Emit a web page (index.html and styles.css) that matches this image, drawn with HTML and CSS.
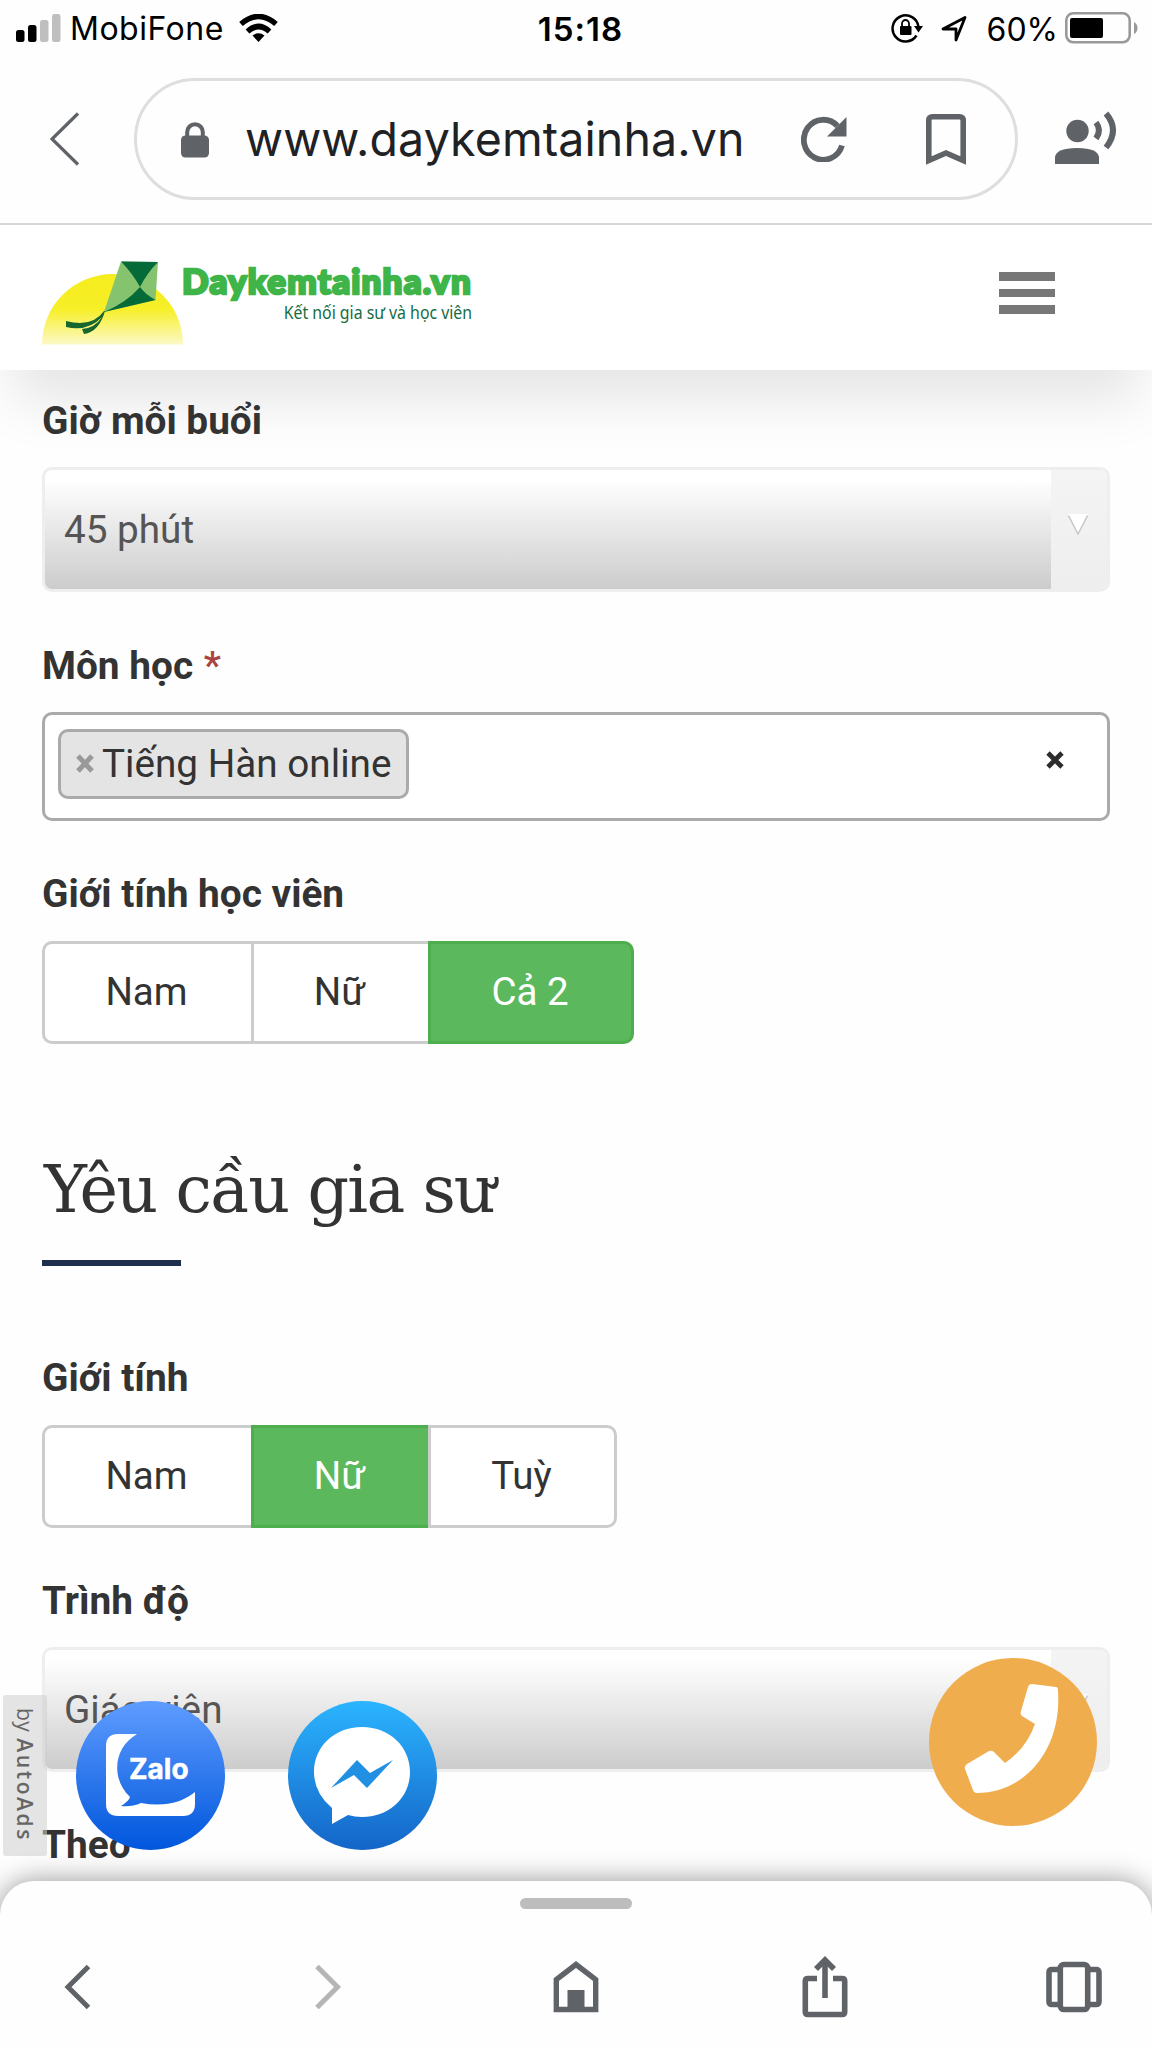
FILE: index.html
```html
<!DOCTYPE html>
<html lang="vi">
<head>
<meta charset="utf-8">
<title>Daykemtainha.vn</title>
<link rel="stylesheet" href="styles.css">
</head>
<body>
<div class="screen">
  <header class="status">
    <div class="status-left">
      <svg width="45" height="28" viewBox="0 0 45 28"><rect x="0" y="16" width="8.500" height="12" rx="2.500"/><rect x="12" y="11" width="8.500" height="17" rx="2.500"/><g fill="#bfbfbf"><rect x="24" y="6" width="8.500" height="22" rx="2.500"/><rect x="36" y="0" width="8.500" height="28" rx="2.500"/></g></svg>
      <span class="carrier">MobiFone</span>
      <svg width="39" height="28" viewBox="0 0 39 28"><g fill="none" stroke="#000" stroke-width="5.500"><path d="M2 10Q19.500-5 37 10"/><path d="M8.500 17.500Q19.500 7.500 30.500 17.500"/></g><path d="M13.500 21.500Q19.500 17 25.500 21.500L19.500 28Z"/></svg>
    </div>
    <span class="clock">15:18</span>
    <div class="status-right">
      <svg width="32" height="30" viewBox="0 0 32 30"><path d="M25.500 22.500A13 13 0 1 1 27.500 14" fill="none" stroke="#000" stroke-width="2.500"/><path d="M23 13h9l-4.500 6.500z"/><rect x="9" y="13" width="11.500" height="9" rx="1"/><path d="M11 14v-3.500a3.500 3.500 0 0 1 7 0V14" fill="none" stroke="#000" stroke-width="1.800"/></svg>
      <svg class="loc" width="26" height="27" viewBox="0 0 26 27"><path d="M2 14L24 2.500L15 25V14Z" fill="none" stroke="#000" stroke-width="2.800" stroke-linejoin="round"/></svg>
      <span class="percent">60%</span>
      <svg width="73" height="32" viewBox="0 0 73 32"><rect x="1.300" y="1.300" width="63.400" height="29" rx="7" fill="none" stroke="#999" stroke-width="2.600"/><rect x="5" y="6" width="33" height="20" rx="2"/><path d="M69 10q3.500 2 3.500 6t-3.500 6z" fill="#999"/></svg>
    </div>
  </header>

  <nav class="browser">
    <svg class="back" width="30" height="54" viewBox="0 0 30 54"><path d="M28 1.500L2 27L28 52.500" fill="none" stroke="#5f6368" stroke-width="3.200"/></svg>
    <div class="omnibox">
      <svg class="lock" width="28" height="36" viewBox="0 0 28 36"><rect x="0" y="13.500" width="28" height="22" rx="4.500" fill="#5f6368"/><path d="M6.200 15V10a7.800 7.800 0 0 1 15.600 0v5" fill="none" stroke="#5f6368" stroke-width="4"/></svg>
      <span class="url">www.daykemtainha.vn</span>
      <svg class="reload" width="46" height="46" viewBox="0 0 46 46"><path d="M41 29.500A19.500 20 0 1 1 36.500 10" fill="none" stroke="#5f6368" stroke-width="5.800"/><path d="M45.500 1v19.500h-19.500z" fill="#5f6368"/></svg>
      <svg class="mark" width="40" height="51" viewBox="0 0 40 51"><path d="M2.800 46.500V6.500Q2.800 2.800 6.500 2.800H33.500Q37.200 2.800 37.200 6.500V46.500L20 39Z" fill="none" stroke="#5f6368" stroke-width="5.600"/></svg>
    </div>
    <svg class="voice" width="62" height="54" viewBox="0 0 62 54"><g fill="#5f6368"><circle cx="22.500" cy="20" r="11.200"/><path d="M0 53v-6Q0 37 22 37T44 47v6z"/></g><g fill="none" stroke="#5f6368" stroke-width="6"><path d="M41 11.500Q47 19 41 27.500"/><path d="M51 2.500Q65 19 51 36.500"/></g></svg>
  </nav>

  <div class="site-head">
    <div class="brand">
      <svg width="142" height="86" viewBox="0 0 142 86">
        <defs><linearGradient id="sun" x1="0" y1="0" x2="0" y2="1"><stop offset="0" stop-color="#f5ed1c"/><stop offset=".5" stop-color="#f7ef28"/><stop offset="1" stop-color="#fcf9c8"/></linearGradient></defs>
        <path d="M0 84.500A70.500 70.500 0 0 1 141 84.500Z" fill="url(#sun)"/>
        <path d="M79 1.500L116 2L113.500 40L62 52Z" fill="#86c36f"/>
        <path d="M79 1.500L116 2Q105 13 98 27Q91 14 79 1.500Z" fill="#046b38"/><path d="M98 27Q104 35 113.500 40L62 52Q84 43 98 27Z" fill="#046b38"/>
        <path d="M62 51Q50 68 24 61v6Q46 72 60 57Q53 68 40 69l2 5Q57 72 63 51Z" fill="#17652f"/>
      </svg>
      <div class="brand-text"><span class="brand-name">Daykemtainha.vn</span><span class="brand-tag">Kết nối gia sư và học viên</span></div>
    </div>
    <div class="burger"><i></i><i></i><i></i></div>
  </div>

  <main class="form">
    <label class="label first">Giờ mỗi buổi</label>
    <div class="select"><span class="select-value">45 phút</span><span class="select-arrow"><svg width="20" height="21" viewBox="0 0 20 21"><path d="M0 0H20L10 20Z" fill="#fff"/><path d="M.5 1.500L10 20L19.500 1.500" fill="none" stroke="#c8c8c8" stroke-width="1.500"/></svg></span></div>

    <label class="label subject-label">Môn học <span class="required">*</span></label>
    <div class="tags">
      <span class="tag"><svg width="18" height="19" viewBox="0 0 18 19"><path d="M2 2L16 17M16 2L2 17" stroke="#999" stroke-width="5"/></svg><span>Tiếng Hàn online</span></span>
      <svg class="clear" width="18" height="18" viewBox="0 0 18 18"><path d="M2 2L16 16M16 2L2 16" stroke="#2d2d2d" stroke-width="4.800"/></svg>
    </div>

    <label class="label student-label">Giới tính học viên</label>
    <div class="group"><span class="opt w1">Nam</span><span class="opt w2">Nữ</span><span class="opt w3 on">Cả 2</span></div>

    <h2 class="title">Yêu cầu gia sư</h2>
    <div class="rule"></div>

    <label class="label tutor-label">Giới tính</label>
    <div class="group"><span class="opt w1">Nam</span><span class="opt w2 on">Nữ</span><span class="opt w4">Tuỳ</span></div>

    <label class="label level-label">Trình độ</label>
    <div class="select"><span class="select-value">Giáo viên</span><span class="select-arrow"><svg width="20" height="21" viewBox="0 0 20 21"><path d="M0 0H20L10 20Z" fill="#fff"/><path d="M.5 1.500L10 20L19.500 1.500" fill="none" stroke="#c8c8c8" stroke-width="1.500"/></svg></span></div>
    <label class="label by-label">Theo</label>
  </main>

  <div class="autoads"><span>by <b>AutoAds</b></span></div>
  <div class="fab zalo">
    <svg width="150" height="150" viewBox="0 0 150 150"><path d="M61 33H42Q30 33 30 45V103Q30 115 42 115H107Q119 115 119 103V91Q98 108 65 102Q56 106 45 105Q53 100 54 96C35 78 37 47 61 33Z" fill="#fff"/></svg>
    <span class="zalo-text">Zalo</span>
  </div>
  <div class="fab messenger">
    <svg width="150" height="150" viewBox="0 0 150 150"><path d="M74 26C46 26 26 46 26 71Q26 92 44 107V123L60 114Q67 116 74 116C102 116 122 96 122 71S102 26 74 26Z" fill="#fff"/><path d="M43 87L69 59L82 72L105 59L79 87L66 74Z" fill="#2190e3"/></svg>
  </div>
  <div class="fab phone">
    <svg width="168" height="168" viewBox="0 0 168 168"><path d="M103 26L127 29Q129 29 129 33C133 94 94 135 48 135Q45 135 44 132L36 111Q35 108 38 106L60 93Q63 92 65 94L76 105Q97 91 106 66L93 58Q91 56 92 53L99 29Q100 26 103 26Z" fill="#fff"/></svg>
  </div>

  <footer class="toolbar">
    <div class="handle"></div>
    <div class="tools">
      <svg width="60" height="64" viewBox="0 0 60 64"><path d="M40.500 12.500L20 33L40.500 53.500" fill="none" stroke="#5f6368" stroke-width="5"/></svg>
      <svg width="60" height="64" viewBox="0 0 60 64"><path d="M20 12.500L40.500 33L20 53.500" fill="none" stroke="#b5b5b5" stroke-width="5"/></svg>
      <svg width="60" height="64" viewBox="0 0 60 64"><path d="M10.300 55.500V25.500L30 10.500L49.700 25.500V55.500Z" fill="none" stroke="#5f6368" stroke-width="5.400"/><path d="M21.500 36h17v20h-17z" fill="#5f6368"/></svg>
      <svg width="60" height="64" viewBox="0 0 60 64"><g fill="none" stroke="#5f6368" stroke-width="5.600"><path d="M22 24.500H13Q10.300 24.500 10.300 27V58Q10.300 60.500 13 60.500H47Q49.700 60.500 49.700 58V27Q49.700 24.500 47 24.500H38"/><path d="M30 44V7"/><path d="M21 15L30 6L39 15"/></g></svg>
      <svg width="60" height="64" viewBox="0 0 60 64"><g fill="none" stroke="#5f6368" stroke-width="5.600"><rect x="16.300" y="10.500" width="27.400" height="45" rx="3.500"/><path d="M16 15.500H8Q5 15.500 5 18.500V47.500Q5 50.500 8 50.500H16"/><path d="M44 15.500H52Q55 15.500 55 18.500V47.500Q55 50.500 52 50.500H44"/></g></svg>
    </div>
  </footer>
</div>
</body>
</html>
```
FILE: styles.css
```css
* { box-sizing: border-box; }
body { margin: 0; background: #fff; }
svg { display: block; flex: none; }
.screen { position: relative; width: 1152px; height: 2048px; overflow: hidden; background: #fefefe; display: flex; flex-direction: column; font-family: Roboto, "Liberation Sans", sans-serif; color: #333; }

.status { height: 56px; flex: none; display: grid; grid-template-columns: 1fr auto 1fr; align-items: center; padding: 0 14px 0 16px; font-family: Inter, sans-serif; color: #000; font-size: 32px; }
.status-left, .status-right { display: flex; align-items: center; }
.status-right { justify-content: flex-end; }
.carrier { width: 153px; margin-left: 9px; margin-right: 16px; white-space: nowrap; letter-spacing: .5px; line-height: 55px; padding-top: 1px; }
.clock { font-weight: 600; padding: 2px 0 0 7px; font-size: 33px; letter-spacing: 1px; }
.loc { margin-left: 18px; }
.percent { margin-left: 20px; margin-right: 7px; padding-top: 2px; letter-spacing: 0; }

.browser { height: 169px; flex: none; border-bottom: 2px solid #d6d6d6; display: flex; padding: 22px 35px 0 50px; }
.back { margin-top: 34px; }
.omnibox { width: 884px; height: 122px; margin-left: 54px; border: 3px solid #dedede; border-radius: 61px; display: flex; align-items: center; padding-left: 44px; }
.lock { margin-top: 1px; }
.url { width: 498px; margin-left: 36px; font-family: Inter, sans-serif; font-size: 46.500px; letter-spacing: .1px; color: #202124; white-space: nowrap; }
.reload { margin-left: 58px; }
.mark { margin-left: 79px; }
.voice { margin: 33px 0 0 37px; }

.site-head { height: 145px; flex: none; background: #fff; display: flex; justify-content: space-between; padding: 35px 97px 0 42px; position: relative; z-index: 1; box-shadow: 0 42px 56px -12px rgba(0,0,0,.1); }
.brand { display: flex; }
.brand-text { width: 288px; padding-top: 2px; display: flex; flex-direction: column; align-items: flex-end; white-space: nowrap; }
.brand-name { font-size: 35px; line-height: 36px; font-weight: 900; font-family: Lato, sans-serif; letter-spacing: 1.200px; color: #3fb549; -webkit-text-stroke: 2.600px #3fb549; }
.brand-tag { font-family: "Noto Sans", sans-serif; font-size: 18px; line-height: 24px; margin-top: 2px; color: #156c43; transform: scaleX(.88); transform-origin: right; }
.burger { display: flex; flex-direction: column; gap: 8px; width: 56px; padding-top: 12px; }
.burger i { height: 8.500px; background: #777; }

.form { padding: 0 42px; display: flex; flex-direction: column; align-items: flex-start; position: relative; z-index: 2; }
.label { font-size: 38.800px; line-height: 44px; font-weight: 700; color: #333; white-space: nowrap; }
.first { margin-top: 29px; }
.select { width: 1068px; height: 125px; border: 3px solid #eee; border-radius: 10px; display: flex; margin-top: 24px; overflow: hidden; }
.select-value { flex: 1; font-size: 38.700px; line-height: 120px; padding-left: 19px; color: #555; background: linear-gradient(#fff 8%, #ccc); }
.select-arrow { width: 56px; background: linear-gradient(#f4f4f4, #eee); padding: 44px 0 0 17px; }
.subject-label { margin-top: 52px; }
.required { color: #a94442; margin-left: 1px; font-weight: 500; }
.tags { width: 1068px; height: 109px; border: 3px solid #aaa; border-radius: 10px; margin-top: 24px; background: #fff; display: flex; justify-content: space-between; padding: 14px 43px 0 13px; }
.tag { width: 351px; height: 70px; border: 3px solid #aaa; border-radius: 10px; background: #e4e4e4; display: flex; align-items: center; padding: 0 0 2px 15px; gap: 8px; font-size: 38.700px; white-space: nowrap; color: #333; }
.clear { margin-top: 22px; }
.student-label { margin-top: 51px; }
.group { display: flex; margin-top: 25px; height: 103px; }
.opt { border: 3px solid #ccc; background: #fff; font-size: 38.500px; line-height: 96px; text-align: center; padding-right: 1px; }
.opt:first-child { border-radius: 10px 0 0 10px; }
.opt:last-child { border-radius: 0 10px 10px 0; }
.opt.on { background: #5cb85c; border-color: #4cae4c; color: #fff; }
.w1 { width: 209px; border-right: 0; padding-right: 3px; }
.w2 { width: 177px; border-right: 0; padding-right: 3px; }
.w3 { width: 206px; padding-right: 2px; }
.w4 { width: 189px; padding-right: 2px; }
.title { font-family: "Roboto Slab", "DejaVu Serif", serif; font-size: 65px; line-height: 80px; font-weight: 400; letter-spacing: -1.700px; margin: 106px 0 0 2px; white-space: nowrap; }
.rule { width: 139px; height: 6px; background: #1f2e4d; margin-top: 30px; }
.tutor-label { margin-top: 90px; }
.level-label { margin-top: 51px; }
.by-label { margin-top: 51px; }

.autoads { position: absolute; z-index: 3; left: 3px; top: 1695px; width: 44px; height: 161px; border-radius: 3px; background: rgba(205,205,205,.55); display: flex; align-items: center; justify-content: center; }
.autoads span { writing-mode: vertical-rl; font-family: "Open Sans", sans-serif; font-size: 21px; letter-spacing: .5px; color: #666; white-space: nowrap; }
.autoads b { font-weight: 600; letter-spacing: 2.600px; }
.fab { position: absolute; z-index: 4; border-radius: 50%; width: 149px; height: 149px; top: 1701px; }
.zalo { left: 76px; background: linear-gradient(#5f9cff, #0056dc); }
.zalo-text { position: absolute; left: 53px; top: 50px; font: 700 28px/36px Inter, sans-serif; color: #fff; -webkit-text-stroke: .5px #fff; }
.messenger { left: 288px; background: linear-gradient(#2bb4ff, #1465c8); }
.phone { left: 929px; top: 1658px; width: 168px; height: 168px; background: #f0ad4e; }

.toolbar { position: absolute; z-index: 5; left: 0; right: 0; bottom: 0; height: 167px; border-radius: 34px 34px 0 0; background: #fefefe; box-shadow: 0 0 28px rgba(0,0,0,.42); padding-top: 17px; }
.handle { width: 112px; height: 11px; border-radius: 6px; background: #bdbdbd; margin: 0 auto; }
.tools { display: flex; justify-content: space-between; padding: 45px 48px 0; }
```
